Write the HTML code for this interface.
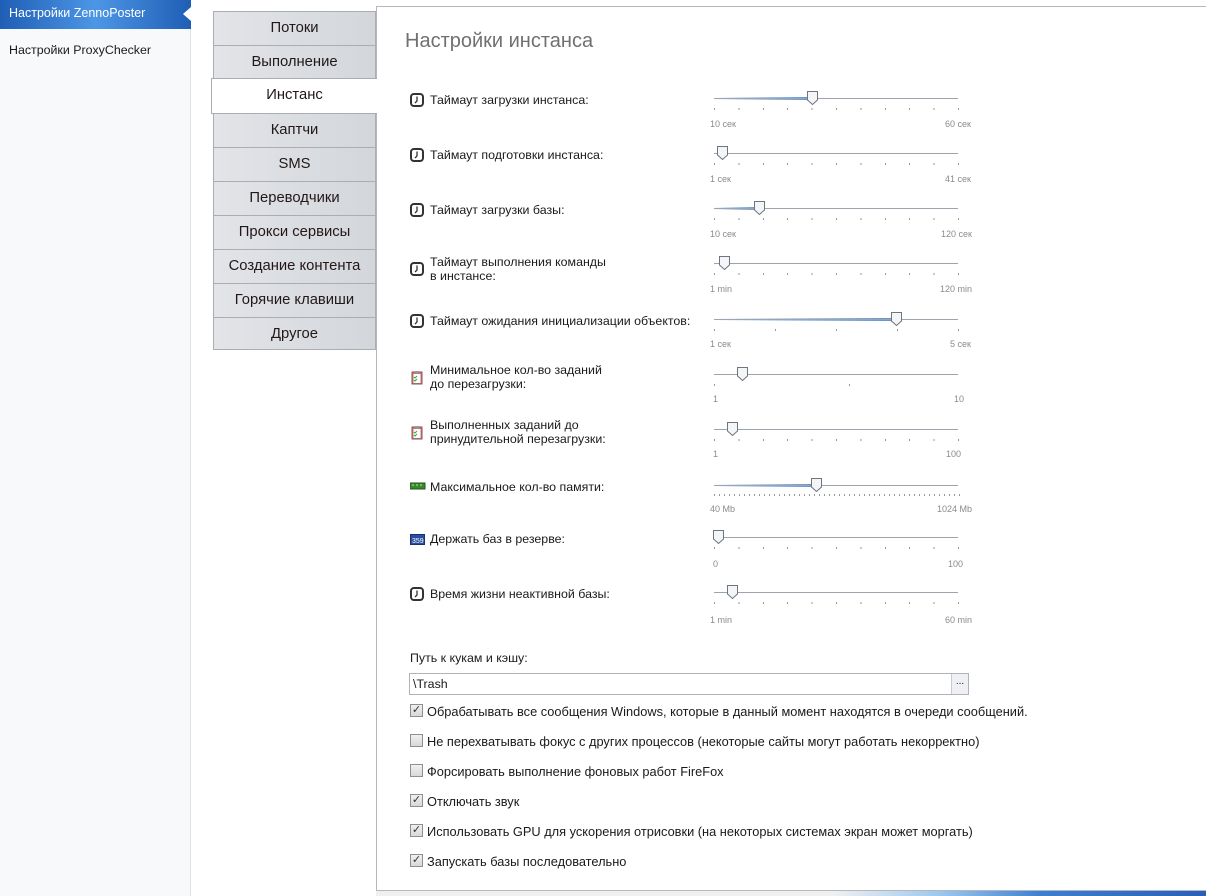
<!DOCTYPE html>
<html><head><meta charset="utf-8"><style>
*{margin:0;padding:0;box-sizing:border-box}
body{width:1206px;height:896px;position:relative;overflow:hidden;background:#fff;font-family:"Liberation Sans",sans-serif;color:#1a1a1a}
.side{position:absolute;left:0;top:0;width:191px;height:896px;background:#f8f9fb;border-right:1px solid #dde0e4}
.sel{position:absolute;left:0;top:0;width:191px;height:29px;background:linear-gradient(90deg,#1f5eb5,#4d96e6 50%,#1f5eb5);color:#fff;font-size:12.5px;line-height:26px;padding-left:9px}
.sel:after{content:"";position:absolute;right:0;top:7px;border:7px solid transparent;border-right-color:#fff;border-right-width:8px}
.tab{position:absolute;left:213px;width:163px;height:34px;background:linear-gradient(90deg,#e2e4e8,#d3d6da);border:1px solid #aaadb2;border-bottom:none;font-size:14.8px;text-align:center;line-height:32px;color:#221818}
.panel{position:absolute;left:376px;top:6px;width:840px;height:885px;border:1px solid #b4b7bc;background:#fff}
.t{position:absolute;font-size:12.4px;white-space:nowrap}
.c{font-size:12.8px}
.tr{position:absolute;left:714px;width:244px;height:1px;background:#9ea4ad}
.fill{position:absolute;left:714px;height:3px;background:linear-gradient(90deg,#fff,#5b8fd0);border-radius:1px}
.tk{position:absolute;left:714px;width:246px;height:2px;background:repeating-linear-gradient(90deg,#999 0 1px,transparent 1px 24.4px)}
.lb{position:absolute;font-size:9px;color:#8a8a8a}
.th{position:absolute;width:11px;height:14px}
.ic{position:absolute;left:410px;width:14px;height:14px}
.cb{position:absolute;left:410px;width:13px;height:13px;border:1px solid #8f8f8f;background:linear-gradient(#f0f0f0,#d8d8d8);font-size:11px;line-height:11px;text-align:center;color:#333}
</style></head><body>
<div class="side"><div class="sel">Настройки ZennoPoster</div>
<div class="t" style="left:9px;top:43px">Настройки ProxyChecker</div></div>
<div class="panel"></div>
<div class="tab" style="top:11px">Потоки</div>
<div class="tab" style="top:45px">Выполнение</div>
<div class="tab" style="top:113px">Каптчи</div>
<div class="tab" style="top:147px">SMS</div>
<div class="tab" style="top:181px">Переводчики</div>
<div class="tab" style="top:215px">Прокси сервисы</div>
<div class="tab" style="top:249px">Создание контента</div>
<div class="tab" style="top:283px">Горячие клавиши</div>
<div class="tab" style="top:317px;height:33px;border-bottom:1px solid #aaadb2">Другое</div>
<div class="tab" style="top:78px;left:211px;width:166px;height:36px;background:#fff;border-right:none;border-bottom:1px solid #aaadb2">Инстанс</div>
<div class="t" style="left:405px;top:30px;font-size:20px;color:#707070">Настройки инстанса</div>

<svg width="0" height="0" style="position:absolute"><defs>
<g id="clk"><rect x="1" y="1" width="12" height="12" rx="3" fill="#fff" stroke="#333" stroke-width="2"/><path d="M7 3.5V8L5 10" stroke="#333" stroke-width="1.3" fill="none"/></g>
<g id="thm"><path d="M0.5 0.5H10.5V9L5.5 13.5L0.5 9Z" fill="#f4f5f7" stroke="#6d7580"/></g>
<g id="clip"><rect x="2" y="2" width="10" height="12" fill="#c77" stroke="#855"/><rect x="3.5" y="4" width="7" height="9" fill="#fff"/><rect x="5" y="1" width="4" height="2" fill="#999"/><path d="M4 7l1 1 2-2M4 10l1 1 2-2" stroke="#3a3" fill="none"/></g>
</defs></svg>

<svg class="ic" style="top:93px"><use href="#clk"/></svg><div class="t" style="left:430px;top:93px">Таймаут загрузки инстанса:</div>
<svg class="ic" style="top:148px"><use href="#clk"/></svg><div class="t" style="left:430px;top:148px">Таймаут подготовки инстанса:</div>
<svg class="ic" style="top:203px"><use href="#clk"/></svg><div class="t" style="left:430px;top:203px">Таймаут загрузки базы:</div>
<svg class="ic" style="top:262px"><use href="#clk"/></svg><div class="t" style="left:430px;top:255px;line-height:14px">Таймаут выполнения команды<br>в инстансе:</div>
<svg class="ic" style="top:314px"><use href="#clk"/></svg><div class="t" style="left:430px;top:314px">Таймаут ожидания инициализации объектов:</div>
<svg class="ic" style="top:370px;height:16px"><use href="#clip"/></svg><div class="t" style="left:430px;top:363px;line-height:14px">Минимальное кол-во заданий<br>до перезагрузки:</div>
<svg class="ic" style="top:425px;height:16px"><use href="#clip"/></svg><div class="t" style="left:430px;top:418px;line-height:14px">Выполненных заданий до<br>принудительной перезагрузки:</div>
<svg class="ic" style="top:481px;width:16px"><rect x="0" y="2" width="15" height="6" fill="#3a8a2a" stroke="#1d5a14"/><path d="M2 4h2M6 4h2M10 4h2" stroke="#ccc"/></svg><div class="t" style="left:430px;top:480px">Максимальное кол-во памяти:</div>
<svg class="ic" style="top:532px;width:16px"><rect x="0.5" y="2.5" width="14" height="10" fill="#2a4ea0" stroke="#1a3070"/><text x="2" y="11" font-size="7" fill="#fff" font-family="Liberation Sans">359</text></svg><div class="t" style="left:430px;top:532px">Держать баз в резерве:</div>
<svg class="ic" style="top:587px"><use href="#clk"/></svg><div class="t" style="left:430px;top:587px">Время жизни неактивной базы:</div>

<div class="fill" style="top:97px;width:98px"></div><div class="tr" style="top:98px"></div><div class="tk" style="top:108px"></div><svg class="th" style="left:807px;top:91px"><use href="#thm"/></svg><div class="lb" style="left:710px;top:119px">10 сек</div><div class="lb" style="left:945px;top:119px">60 сек</div>
<div class="tr" style="top:153px"></div><div class="tk" style="top:163px"></div><svg class="th" style="left:717px;top:146px"><use href="#thm"/></svg><div class="lb" style="left:710px;top:174px">1 сек</div><div class="lb" style="left:945px;top:174px">41 сек</div>
<div class="fill" style="top:207px;width:45px"></div><div class="tr" style="top:208px"></div><div class="tk" style="top:218px"></div><svg class="th" style="left:754px;top:201px"><use href="#thm"/></svg><div class="lb" style="left:710px;top:229px">10 сек</div><div class="lb" style="left:941px;top:229px">120 сек</div>
<div class="tr" style="top:263px"></div><div class="tk" style="top:273px"></div><svg class="th" style="left:719px;top:256px"><use href="#thm"/></svg><div class="lb" style="left:710px;top:284px">1 min</div><div class="lb" style="left:940px;top:284px">120 min</div>
<div class="fill" style="top:318px;width:182px"></div><div class="tr" style="top:319px"></div><div class="tk" style="top:329px;background:repeating-linear-gradient(90deg,#999 0 1px,transparent 1px 61px)"></div><svg class="th" style="left:891px;top:312px"><use href="#thm"/></svg><div class="lb" style="left:710px;top:339px">1 сек</div><div class="lb" style="left:950px;top:339px">5 сек</div>
<div class="tr" style="top:374px"></div><div class="tk" style="top:384px;background:repeating-linear-gradient(90deg,#999 0 1px,transparent 1px 135px)"></div><svg class="th" style="left:737px;top:367px"><use href="#thm"/></svg><div class="lb" style="left:713px;top:394px">1</div><div class="lb" style="left:954px;top:394px">10</div>
<div class="tr" style="top:429px"></div><div class="tk" style="top:439px"></div><svg class="th" style="left:727px;top:422px"><use href="#thm"/></svg><div class="lb" style="left:713px;top:449px">1</div><div class="lb" style="left:946px;top:449px">100</div>
<div class="fill" style="top:484px;width:102px"></div><div class="tr" style="top:485px"></div><div class="tk" style="top:494px;background:repeating-linear-gradient(90deg,#999 0 1px,transparent 1px 5px)"></div><svg class="th" style="left:811px;top:478px"><use href="#thm"/></svg><div class="lb" style="left:710px;top:504px">40 Mb</div><div class="lb" style="left:937px;top:504px">1024 Mb</div>
<div class="tr" style="top:537px"></div><div class="tk" style="top:547px"></div><svg class="th" style="left:713px;top:530px"><use href="#thm"/></svg><div class="lb" style="left:713px;top:559px">0</div><div class="lb" style="left:948px;top:559px">100</div>
<div class="tr" style="top:592px"></div><div class="tk" style="top:602px"></div><svg class="th" style="left:727px;top:585px"><use href="#thm"/></svg><div class="lb" style="left:710px;top:615px">1 min</div><div class="lb" style="left:945px;top:615px">60 min</div>

<div class="t" style="left:410px;top:651px">Путь к кукам и кэшу:</div>
<div style="position:absolute;left:409px;top:673px;width:560px;height:22px;border:1px solid #b0b4ba;background:#fff"><div class="t" style="left:3px;top:3px">\Trash</div><div style="position:absolute;right:0;top:0;width:17px;height:20px;border-left:1px solid #c8cbd0;background:#eef0f3;font-size:10px;text-align:center;line-height:16px">...</div></div>
<div class="cb" style="top:704px">✓</div><div class="t c" style="left:427px;top:704px">Обрабатывать все сообщения Windows, которые в данный момент находятся в очереди сообщений.</div>
<div class="cb" style="top:734px"></div><div class="t c" style="left:427px;top:734px">Не перехватывать фокус с других процессов (некоторые сайты могут работать некорректно)</div>
<div class="cb" style="top:764px"></div><div class="t c" style="left:427px;top:764px">Форсировать выполнение фоновых работ FireFox</div>
<div class="cb" style="top:794px">✓</div><div class="t c" style="left:427px;top:794px">Отключать звук</div>
<div class="cb" style="top:824px">✓</div><div class="t c" style="left:427px;top:824px">Использовать GPU для ускорения отрисовки (на некоторых системах экран может моргать)</div>
<div class="cb" style="top:854px">✓</div><div class="t c" style="left:427px;top:854px">Запускать базы последовательно</div>
<div style="position:absolute;left:376px;top:891px;width:830px;height:5px;background:linear-gradient(90deg,#f0f0f0 0,#f0f0f0 55%,#9cc8ef 68%,#3e7fd0 80%,#2a5fb8 100%)"></div>
</body></html>
